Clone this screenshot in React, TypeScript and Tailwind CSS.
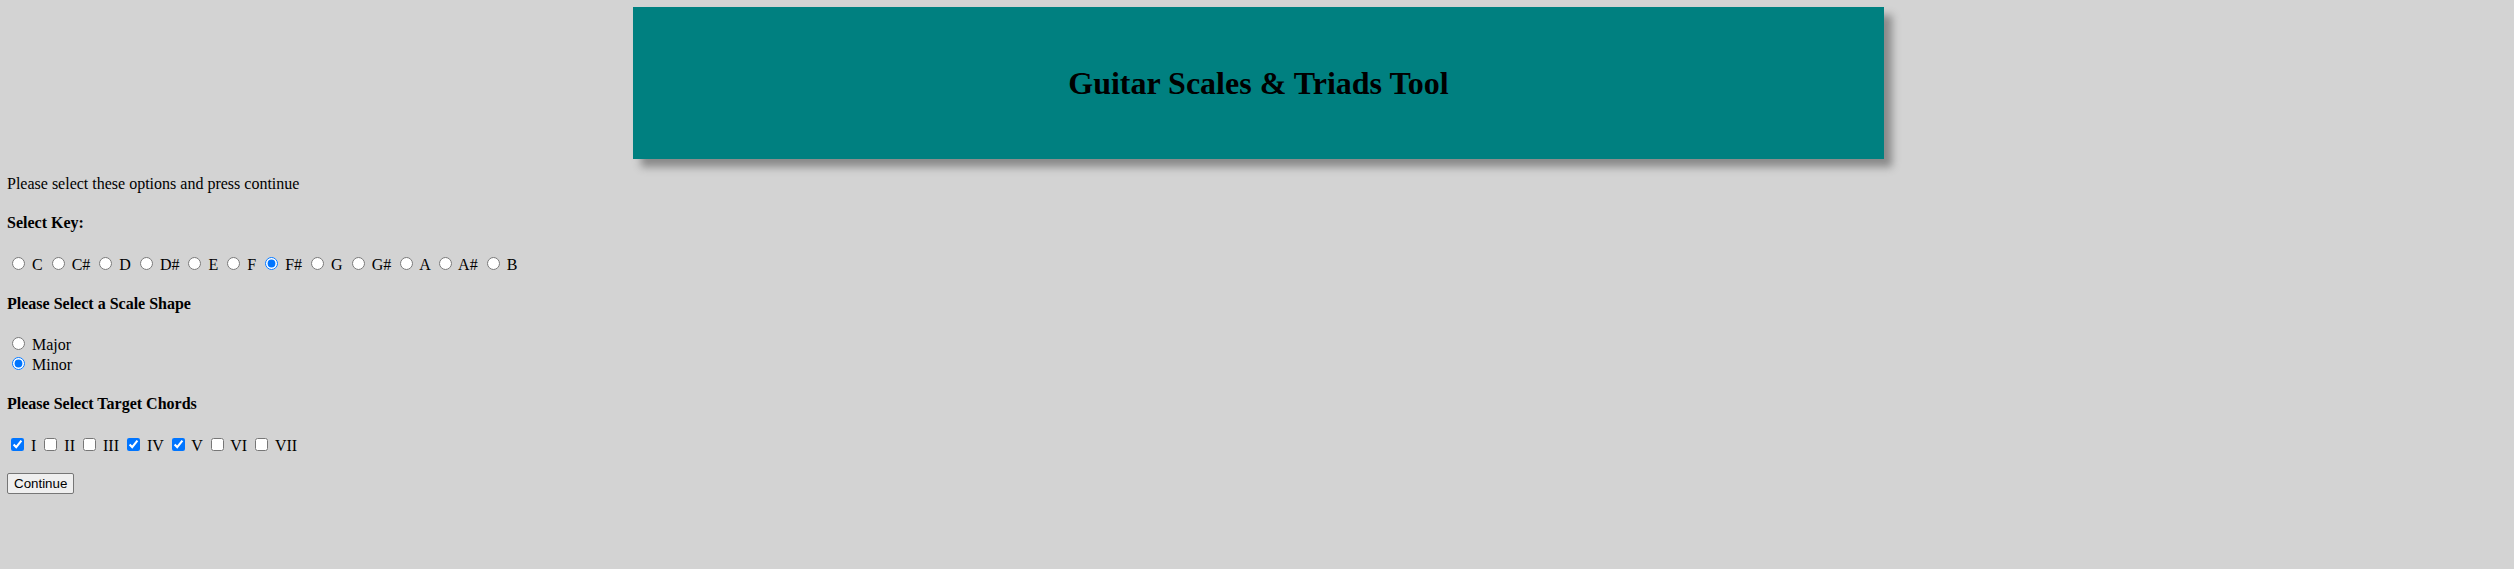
import { Fragment } from "react";

const keys = ["C", "C#", "D", "D#", "E", "F", "F#", "G", "G#", "A", "A#", "B"];
const chords = ["I", "II", "III", "IV", "V", "VI", "VII"];
const checkedChords = ["I", "IV", "V"];

const App = () => {
  return (
    <div className="min-h-screen bg-[#d3d3d3] p-[7px] font-['Liberation_Serif',_'Times_New_Roman',_serif] text-[16px] text-black">
      {/* header */}
      <div className="ml-[626px] flex h-[152px] w-[1251px] items-center justify-center bg-[#008080] shadow-[8px_8px_8px_#8a8a8a]">
        <h1 className="text-[32px] font-bold leading-[37px]">Guitar Scales &amp; Triads Tool</h1>
      </div>

      <p className="mt-4 mb-4 leading-[18px]">Please select these options and press continue</p>

      <h4 className="my-[21.28px] font-bold leading-[18px]">Select Key:</h4>
      <div className="leading-[18px]">
        {keys.map((k) => (
          <Fragment key={k}>
            <input
              type="radio"
              name="key"
              defaultChecked={k === "F#"}
              className="mt-[3px] mr-[3px] ml-[5px] h-[13px] w-[13px] align-baseline"
            />{" "}
            {k}{" "}
          </Fragment>
        ))}
      </div>

      <h4 className="my-[21.28px] font-bold leading-[18px]">Please Select a Scale Shape</h4>
      <div className="leading-[18px]">
        <input type="radio" name="shape" className="mt-[3px] mr-[3px] ml-[5px] h-[13px] w-[13px]" /> Major
        <br />
        <input type="radio" name="shape" defaultChecked className="mt-[3px] mr-[3px] ml-[5px] h-[13px] w-[13px]" /> Minor
      </div>

      <h4 className="my-[21.28px] font-bold leading-[18px]">Please Select Target Chords</h4>
      <div className="leading-[18px]">
        {chords.map((c) => (
          <Fragment key={c}>
            <input
              type="checkbox"
              defaultChecked={checkedChords.includes(c)}
              className="mt-[3px] mr-[3px] mb-[1px] ml-[4px] h-[13px] w-[13px]"
            />{" "}
            {c}{" "}
          </Fragment>
        ))}
      </div>

      <div className="mt-4">
        <button
          type="button"
          className="rounded-[2px] border border-[#767676] bg-[#efefef] px-[6px] py-[1px] font-['Liberation_Sans',_Arial,_sans-serif] text-[13.333px] leading-[17px]"
        >
          Continue
        </button>
      </div>
    </div>
  );
};

export default App;
